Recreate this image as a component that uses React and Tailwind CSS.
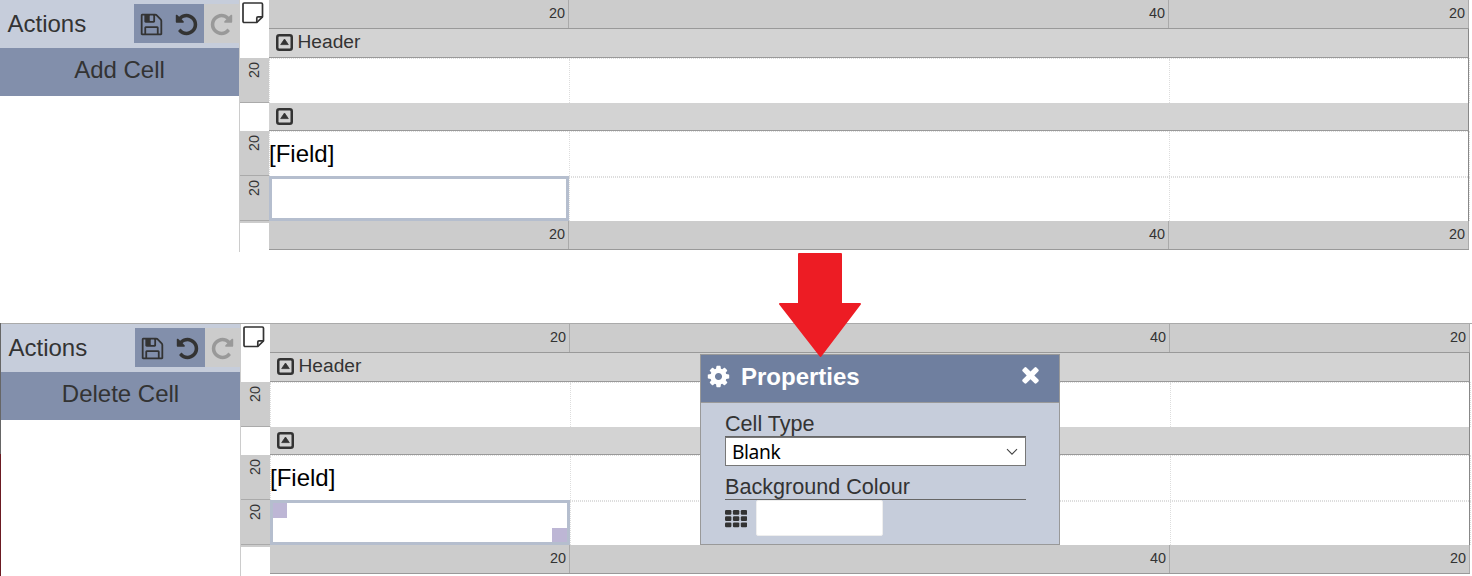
import React from 'react';

const ICONS = {
  save: 'M512 1536h768v-384h-768v384zm896 0h128v-896q0-14-10-38.5t-20-34.5l-281-281q-10-10-34-20t-39-10v416q0 40-28 68t-68 28h-576q-40 0-68-28t-28-68v-416h-128v1280h128v-416q0-40 28-68t68-28h832q40 0 68 28t28 68v416zm-384-928v-320q0-13-9.5-22.5t-22.5-9.5h-192q-13 0-22.5 9.5t-9.5 22.5v320q0 13 9.5 22.5t22.5 9.5h192q13 0 22.5-9.5t9.5-22.5zm640 32v928q0 40-28 68t-68 28h-1344q-40 0-68-28t-28-68v-1344q0-40 28-68t68-28h928q40 0 88 20t76 48l280 280q28 28 48 76t20 88z',
  undo: 'M1664 896q0 156-61 298t-164 245-245 164-298 61q-172 0-327-72.5t-264-204.5q-7-10-6.5-22.5t8.5-20.5l137-138q10-9 25-9 16 2 23 12 73 95 179 147t225 52q104 0 198.5-40.5t163.5-109.5 109.5-163.5 40.5-198.5-40.5-198.5-109.5-163.5-163.5-109.5-198.5-40.5q-98 0-188 35.5t-160 101.5l137 138q31 30 14 69-17 40-59 40h-448q-26 0-45-19t-19-45v-448q0-42 40-59 39-17 69 14l130 129q107-101 244.5-156.5t284.5-55.5q156 0 298 61t245 164 164 245 61 298z',
  redo: 'M1664 256v448q0 26-19 45t-45 19h-448q-42 0-59-40-17-39 14-69l138-138q-148-137-349-137-104 0-198.5 40.5t-163.5 109.5-109.5 163.5-40.5 198.5 40.5 198.5 109.5 163.5 163.5 109.5 198.5 40.5q119 0 225-52t179-147q7-10 23-12 15 0 25 9l137 138q9 8 9.5 20.5t-7.5 22.5q-109 132-264 204.5t-327 72.5q-156 0-298-61t-245-164-164-245-61-298 61-298 164-245 245-164 298-61q147 0 284.5 55.5t244.5 156.5l130-129q29-31 70-14 39 17 39 59z',
  cog: 'M1152 896q0-106-75-181t-181-75-181 75-75 181 75 181 181 75 181-75 75-181zm512-109v222q0 12-8 23t-20 13l-185 28q-19 54-39 91 35 50 107 138 10 12 10 25t-9 23q-27 37-99 108t-94 71q-12 0-26-9l-138-108q-44 23-91 38-16 136-29 186-7 28-36 28h-222q-14 0-24.5-8.5t-11.5-21.5l-28-184q-49-16-90-37l-141 107q-10 9-25 9-14 0-25-11-126-114-165-168-7-10-7-23 0-12 8-23 15-21 51-66.5t54-70.5q-27-50-41-99l-183-27q-13-2-21-12.5t-8-23.5v-222q0-12 8-23t19-13l186-28q14-46 39-92-40-57-107-138-10-12-10-24 0-10 9-23 26-36 98.5-107.5t94.5-71.5q13 0 26 10l138 107q44-23 91-38 16-136 29-186 7-28 36-28h222q14 0 24.5 8.5t11.5 21.5l28 184q49 16 90 37l142-107q9-9 24-9 13 0 25 10 129 119 165 170 7 8 7 22 0 12-8 23-15 21-51 66.5t-54 70.5q26 50 41 98l183 28q13 2 21 12.5t8 23.5z',
  times: 'M1490 1322q0 40-28 68l-136 136q-28 28-68 28t-68-28l-294-294-294 294q-28 28-68 28t-68-28l-136-136q-28-28-28-68t28-68l294-294-294-294q-28-28-28-68t28-68l136-136q28-28 68-28t68 28l294 294 294-294q28-28 68-28t68 28l136 136q28 28 28 68t-28 68l-294 294 294 294q28 28 28 68z',
};

const Icon = ({ name, className }) => (
  <svg viewBox="0 0 1792 1792" fill="currentColor" className={className}>
    <path d={ICONS[name]} />
  </svg>
);

const NoteIcon = () => (
  <svg width="22" height="22" viewBox="0 0 22 22" fill="none" stroke="#333" strokeWidth="1.7" strokeLinejoin="round">
    <path d="M2.2 1h17.1q1.2 0 1.2 1.2V14.8l-5.7 5.7H2.2Q1 20.5 1 19.3V2.2Q1 1 2.2 1z" />
    <path d="M14.8 20.5V16q0-1.2 1.2-1.2h4.5" />
  </svg>
);

const CollapseIcon = () => (
  <svg width="17" height="17" viewBox="0 0 17 17" fill="none">
    <rect x="1.25" y="1.25" width="14.5" height="14.5" rx="2" stroke="#333" strokeWidth="2.5" />
    <path d="M8.5 5l3.8 5.6H4.7z" fill="#333" stroke="#333" strokeWidth="0.8" strokeLinejoin="round" />
  </svg>
);

const GridIcon = () => (
  <svg width="22" height="18" viewBox="0 0 22 18" fill="#333">
    {[0, 6.2, 12.4].map((y) =>
      [0, 7.9, 15.8].map((x) => <rect key={`${x}-${y}`} x={x} y={y} width="6.4" height="4.8" rx="1.2" />)
    )}
  </svg>
);

const Sidebar = ({ action }) => (
  <div className="w-[240px] shrink-0 border-r border-[#ccc]">
    <div className="flex h-12 bg-[#c6cddb] pt-1">
      <div className="w-[134px] pl-[7.5px] text-2xl leading-[39px]">Actions</div>
      <div className="flex h-[39px] w-[70px] items-center bg-[#828fab] pl-[5px] pt-px">
        <Icon name="save" className="size-[25px]" />
        <Icon name="undo" className="ml-[10px] size-[25px]" />
      </div>
      <div className="flex h-[39px] w-[35px] items-center bg-[#ccc] pl-[5px] pt-px text-[#999]">
        <Icon name="redo" className="size-[25px]" />
      </div>
    </div>
    <div className="h-12 bg-[#828fab] text-center text-2xl leading-[44px]">{action}</div>
  </div>
);

const RowMark = () => (
  <div className="h-[45px] border-b border-[#aaa] bg-[#ccc] pl-[4px] pt-[3px]">
    <span className="block h-[17px] w-[20px] rotate-180 text-[14.4px] leading-[20px] [writing-mode:vertical-rl]">20</span>
  </div>
);

const RowRuler = () => (
  <div className="w-[29px] shrink-0">
    <div className="h-[58px] pl-[2px] pt-[2px]">
      <NoteIcon />
    </div>
    <RowMark />
    <div className="h-7" />
    <RowMark />
    <RowMark />
    <div className="h-[2px] bg-[#ccc]" />
  </div>
);

const ColumnRuler = () => (
  <div className="flex h-[29px] w-[1200px] border-b border-[#999] bg-[#ccc] text-right text-[14.4px] leading-[26px]">
    <div className="w-[300px] border-r border-[#aaa] pr-[3px]">20</div>
    <div className="w-[600px] border-r border-[#aaa] pr-[3px]">40</div>
    <div className="w-[300px] border-r border-[#aaa] pr-[3px]">20</div>
  </div>
);

const Band = ({ title, className }) => (
  <div className={`flex w-[1200px] items-center border-r border-b border-r-[#888] border-b-[#999] bg-[#d3d3d3] pl-[7px] text-[19.2px] ${className}`}>
    <CollapseIcon />
    <span className="ml-[4.5px]">{title}</span>
  </div>
);

const Row = ({ children, className }) => (
  <div className={`flex w-[1201px] border-t border-r border-dotted border-[#ddd] ${className}`}>
    <div className="w-[300px] border-l border-dotted border-[#ddd] text-2xl leading-[44px] text-black">{children}</div>
    <div className="w-[600px] border-l border-dotted border-[#ddd]" />
    <div className="flex w-[300px] justify-end border-l border-dotted border-[#ddd]">
      <div className="-my-px w-px bg-[#888]" />
    </div>
  </div>
);

const SelectedCell = ({ handles }) => (
  <div className="absolute -left-px -top-[2px] z-10 h-[45px] w-[300px] border-3 border-[#b5bece]">
    {handles && (
      <>
        <div className="absolute left-0 top-0 h-[15px] w-[14px] bg-[#bdb6d5]" />
        <div className="absolute bottom-0 right-0 h-[14px] w-[15px] bg-[#bdb6d5]" />
      </>
    )}
  </div>
);

const Editor = ({ action, handles }) => (
  <div className="flex h-[252px]">
    <Sidebar action={action} />
    <RowRuler />
    <div className="shrink-0">
      <ColumnRuler />
      <Band title="Header" className="h-[29px] pb-px" />
      <Row className="h-[45px]" />
      <Band title="" className="h-7" />
      <Row className="h-[46px] border-b">
        <span className="-ml-px">[Field]</span>
      </Row>
      <Row className="h-[44px]">
        <div className="relative">
          <SelectedCell handles={handles} />
        </div>
      </Row>
      <ColumnRuler />
    </div>
  </div>
);

const Properties = () => (
  <div className="absolute left-[700px] top-[354px] z-20 h-[191px] w-[360px] border border-[#999] bg-[#c6cddb]">
    <div className="flex h-[48px] items-start border-b border-[#999] bg-[#6f7f9f] pl-[5px] text-white">
      <Icon name="cog" className="mt-[9px] size-[25px]" />
      <span className="ml-[10px] text-2xl font-bold leading-[44px]">Properties</span>
      <Icon name="times" className="ml-auto mr-[16px] mt-[7px] size-[25px]" />
    </div>
    <div className="px-6 pt-[9px] text-[21.6px]">
      <div className="h-[25px] w-[301px] border-b border-[#666] leading-[24px]">Cell Type</div>
      <div className="flex h-[29px] w-[301px] items-center justify-between border border-[#777] bg-white pl-[6px] pr-[7px] text-black">
        <span className="pt-[2px] font-['Noto_Sans'] text-[19.2px] tracking-[-0.4px]">Blank</span>
        <svg width="12" height="8" viewBox="0 0 12 8" fill="none" stroke="#444" strokeWidth="1.1">
          <path d="M1 1.2l5 5 5-5" />
        </svg>
      </div>
      <div className="mt-[9px] h-[25px] w-[301px] border-b border-[#666] leading-[24px]">Background Colour</div>
      <div className="flex">
        <div className="mt-[9.5px] w-[31px]">
          <GridIcon />
        </div>
        <div className="h-[36px] w-[127px] rounded-[2px] border border-[#eee] bg-white" />
      </div>
    </div>
  </div>
);

const Arrow = () => (
  <svg className="absolute left-[778px] top-[252px] z-30" width="84" height="106" viewBox="0 0 84 106">
    <path d="M21 2h42v50h19L42.5 104 2 52h19z" fill="#ed1c24" stroke="#ed1c24" strokeWidth="2" strokeLinejoin="round" />
  </svg>
);

export default function App() {
  return (
    <div className="relative h-[576px] w-[1472px] overflow-hidden bg-white font-['Liberation_Sans',sans-serif] text-[#333]">
      <Editor action="Add Cell" />
      <div className="mt-[71px] flex">
        <div className="w-px shrink-0">
          <div className="h-[131px] bg-[#666]" />
          <div className="h-[122px] bg-[#6b1a22]" />
        </div>
        <div className="w-[1471px] shrink-0 border-t border-[#aaa]">
          <Editor action="Delete Cell" handles />
        </div>
      </div>
      <Properties />
      <Arrow />
    </div>
  );
}
